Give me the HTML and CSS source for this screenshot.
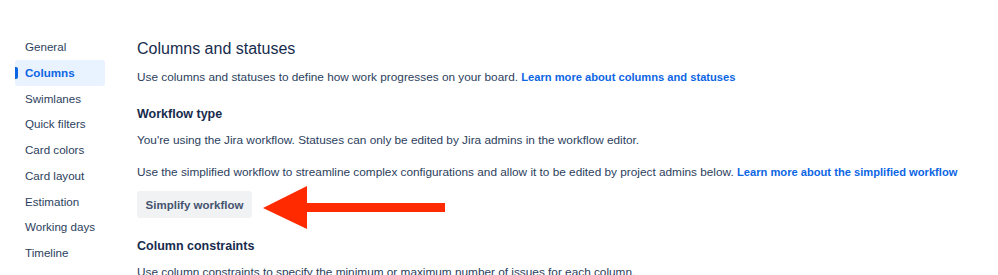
FILE: index.html
```html
<!DOCTYPE html>
<html lang="en">
<head>
    <meta charset="UTF-8">
    <meta name="viewport" content="width=device-width, initial-scale=1.0">
    <title>Board settings - Columns</title>
    <link rel="stylesheet" href="styles.css">
</head>
<body>
    <div class="layout">
        <nav class="sidebar">
            <a class="nav-item">General</a>
            <a class="nav-item active">Columns</a>
            <a class="nav-item">Swimlanes</a>
            <a class="nav-item">Quick filters</a>
            <a class="nav-item">Card colors</a>
            <a class="nav-item">Card layout</a>
            <a class="nav-item">Estimation</a>
            <a class="nav-item">Working days</a>
            <a class="nav-item">Timeline</a>
            <a class="nav-item">Insights</a>
        </nav>
        <main class="content">
            <h1 class="page-title">Columns and statuses</h1>
            <p class="intro">Use columns and statuses to define how work progresses on your board. <a class="link">Learn more about columns and statuses</a></p>

            <h2 class="section-title workflow-title">Workflow type</h2>
            <p class="text-first">You're using the Jira workflow. Statuses can only be edited by Jira admins in the workflow editor.</p>
            <p class="text-second">Use the simplified workflow to streamline complex configurations and allow it to be edited by project admins below. <a class="link">Learn more about the simplified workflow</a></p>
            <div class="button-row">
                <button class="btn">Simplify workflow</button>
                <!-- annotation arrow pointing at the button -->
                <svg class="arrow" width="190" height="46" viewBox="0 0 190 46">
                    <polygon points="0,22 44,0 44,17 182,17 182,26 44,26 44,43" fill="#ff2a00"/>
                </svg>
            </div>

            <h2 class="section-title constraints-title">Column constraints</h2>
            <p class="text-first">Use column constraints to specify the minimum or maximum number of issues for each column.</p>
        </main>
    </div>
</body>
</html>
```

FILE: styles.css
```css
body {
    font-family: "Liberation Sans", Arial, sans-serif;
    background-color: #ffffff;
    color: #2c3e5d;
    margin: 0;
    padding: 0;
    overflow: hidden;
}
.layout {
    display: flex;
}
.sidebar {
    display: flex;
    flex-direction: column;
    width: 90px;
    padding: 34px 0 0 15px;
    flex-shrink: 0;
}
.nav-item {
    display: block;
    position: relative;
    height: 25.75px;
    line-height: 25.75px;
    padding-left: 10px;
    font-size: 11.6px;
    color: #2c3e5d;
    border-radius: 3px;
}
.nav-item.active {
    background-color: #e9f2ff;
    color: #0c66e4;
    font-weight: bold;
}
.nav-item.active::before {
    content: "";
    position: absolute;
    left: 0;
    top: 7px;
    width: 3px;
    height: 12px;
    border-radius: 0 2px 2px 0;
    background-color: #0c66e4;
}
.content {
    flex: 1;
    padding: 39px 0 0 32px;
    font-size: 11.8px;
    line-height: 18px;
}
.page-title {
    font-size: 16px;
    line-height: 20px;
    font-weight: 500;
    color: #172b4d;
    margin: 0;
}
.intro {
    margin: 9px 0 0;
}
.link {
    color: #0c66e4;
    font-size: 11.15px;
    font-weight: bold;
}
.section-title {
    font-size: 12.5px;
    line-height: 18px;
    font-weight: bold;
    color: #172b4d;
    margin: 0;
}
.workflow-title {
    margin-top: 19px;
}
.constraints-title {
    margin-top: 19px;
}
.text-first {
    margin: 8px 0 0;
}
.text-second {
    margin: 14px 0 0;
}
.button-row {
    position: relative;
    margin-top: 10px;
    height: 27px;
}
.btn {
    font-family: inherit;
    font-size: 11.5px;
    font-weight: bold;
    color: #44546f;
    background-color: #f1f2f4;
    border: none;
    border-radius: 3px;
    height: 27px;
    width: 115px;
    padding: 0;
    cursor: pointer;
}
.arrow {
    position: absolute;
    left: 126px;
    top: -5px;
}
```
